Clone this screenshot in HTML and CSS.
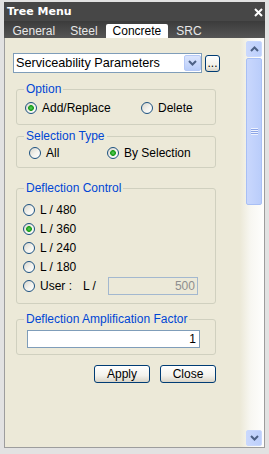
FILE: index.html
```html
<!DOCTYPE html>
<html lang="en">
<head>
<meta charset="UTF-8" />
<meta name="viewport" content="width=device-width, initial-scale=1" />
<title>Tree Menu</title>
<link rel="stylesheet" href="styles.css">
</head>
<body>
<div class="window">
  <div class="titlebar">
    <span class="title">Tree Menu</span>
    <svg class="close" width="9" height="9" viewBox="0 0 9 9"><path d="M1 1L8 8M8 1L1 8" stroke="#fff" stroke-width="2"/></svg>
  </div>
  <div class="tabs">
    <span class="tab">General</span>
    <span class="tab">Steel</span>
    <span class="tab active">Concrete</span>
    <span class="tab">SRC</span>
  </div>
  <div class="panel">
    <div class="content">
      <div class="combo-row">
        <div class="combo">
          <span class="combo-text">Serviceability Parameters</span>
          <span class="combo-btn"><svg width="9" height="6" viewBox="0 0 9 6"><path d="M1 1L4.5 4.5L8 1" fill="none" stroke="#4d6185" stroke-width="2"/></svg></span>
        </div>
        <button class="dots">...</button>
      </div>

      <fieldset class="group g-option">
        <legend>Option</legend>
        <div class="radio-row">
          <label class="radio w-option"><span class="dot on"></span>Add/Replace</label>
          <label class="radio"><span class="dot"></span>Delete</label>
        </div>
      </fieldset>

      <fieldset class="group g-select">
        <legend>Selection Type</legend>
        <div class="radio-row">
          <label class="radio w-select"><span class="dot"></span>All</label>
          <label class="radio"><span class="dot on"></span>By Selection</label>
        </div>
      </fieldset>

      <fieldset class="group g-defl">
        <legend>Deflection Control</legend>
        <div class="defl-list">
          <label class="radio"><span class="dot"></span>L / 480</label>
          <label class="radio"><span class="dot on"></span>L / 360</label>
          <label class="radio"><span class="dot"></span>L / 240</label>
          <label class="radio"><span class="dot"></span>L / 180</label>
          <label class="radio"><span class="dot"></span>User :<span class="l-div">L /</span><input class="user-val" value="500" disabled></label>
        </div>
      </fieldset>

      <fieldset class="group g-amp">
        <legend>Deflection Amplification Factor</legend>
        <input class="amp-val" value="1">
      </fieldset>

      <div class="actions">
        <button class="btn">Apply</button>
        <button class="btn">Close</button>
      </div>
    </div>

    <div class="scroll">
      <div class="sb-btn"><svg width="9" height="6" viewBox="0 0 9 6"><path d="M1 5L4.5 1.5L8 5" fill="none" stroke="#4d6185" stroke-width="2"/></svg></div>
      <div class="thumb"><span class="grip"></span></div>
      <div class="sb-btn down"><svg width="9" height="6" viewBox="0 0 9 6"><path d="M1 1L4.5 4.5L8 1" fill="none" stroke="#4d6185" stroke-width="2"/></svg></div>
    </div>
  </div>
</div>
</body>
</html>
```

FILE: styles.css
```css
body {
  margin: 0;
  background: #e2e2e2;
  font-family: "Liberation Sans", Arial, sans-serif;
  font-size: 12px;
  color: #000;
}
.window {
  width: 269px;
  height: 454px;
  box-sizing: border-box;
  padding: 2px 4px 6px 4px;
  display: flex;
  flex-direction: column;
}
.titlebar {
  height: 19px;
  flex: none;
  background: #474747;
  display: flex;
  align-items: flex-start;
  justify-content: space-between;
  padding: 0 2px 0 3px;
  overflow: hidden;
}
.title {
  font-family: "DejaVu Sans", sans-serif;
  font-weight: bold;
  font-size: 11px;
  line-height: 20px;
  color: #fff;
}
.close {
  margin-top: 6px;
}
.tabs {
  height: 17px;
  flex: none;
  background: linear-gradient(#3b3b3b, #555);
  display: flex;
  align-items: flex-end;
  gap: 2px;
  padding-left: 2px;
}
.tab {
  height: 14px;
  line-height: 14px;
  padding: 0 6.5px;
  color: #e8e8e8;
}
.tab.active {
  background: #fff;
  color: #000;
  border-radius: 2px 2px 0 0;
}
.panel {
  flex: 1;
  min-height: 0;
  display: flex;
  border: 1px solid #9d9d9d;
  border-top: 0;
  background: #ece9d8;
}
.content {
  flex: 1;
  padding: 15px 0 0 8px;
}
.combo-row {
  display: flex;
  align-items: center;
}
.combo {
  width: 189px;
  height: 20px;
  box-sizing: border-box;
  border: 1px solid #7f9db9;
  background: #fff;
  display: flex;
  align-items: center;
}
.combo-text {
  padding-left: 2px;
  font-size: 12.7px;
}
.combo-btn {
  margin-left: auto;
  width: 17px;
  height: 16px;
  box-sizing: border-box;
  border: 1px solid #b5c8f6;
  border-radius: 2px;
  background: linear-gradient(#dbe5fd, #b9cdf9);
  display: flex;
  align-items: center;
  justify-content: center;
}
.dots {
  margin-left: 3px;
  width: 15px;
  height: 17px;
  padding: 0 0 2px;
  box-sizing: border-box;
  border: 1px solid #003c74;
  border-radius: 3px;
  background: linear-gradient(#fff, #f1efe6 70%, #d8d3c6);
  font: inherit;
  line-height: 12px;
  display: flex;
  align-items: flex-end;
  justify-content: center;
}
.group {
  margin: 0 0 0 3px;
  width: 200px;
  min-width: 0;
  box-sizing: border-box;
  border: 1px solid #d0d0bf;
  border-radius: 3px;
  padding: 0;
}
.group legend {
  margin-left: 7px;
  padding: 0 2px;
  line-height: 14px;
  color: #0046d5;
}
.g-option {
  margin-top: 9px;
  padding: 5px 0 9px;
}
.g-option .radio-row {
  padding-left: 8px;
}
.g-select {
  margin-top: 4px;
  padding: 3px 0 7px;
}
.g-select .radio-row {
  padding-left: 12px;
}
.g-defl {
  margin-top: 13px;
  padding: 5px 0 8px;
}
.defl-list {
  padding-left: 6px;
}
.g-amp {
  margin-top: 8px;
  padding: 4px 0 6px;
}
.radio-row {
  display: flex;
  height: 14px;
}
.radio {
  display: flex;
  align-items: center;
}
.w-option {
  width: 116px;
}
.w-select {
  width: 78px;
}
.dot {
  width: 12px;
  height: 12px;
  box-sizing: border-box;
  border: 1px solid #1c5180;
  border-radius: 50%;
  margin-right: 5px;
  background: linear-gradient(135deg, #d8d6cc, #f4f3ee 55%, #fff);
}
.dot.on {
  background: radial-gradient(circle, #5fd35f 0, #21a121 2px, #21a121 2.6px, transparent 3.2px), linear-gradient(135deg, #d8d6cc, #f4f3ee 55%, #fff);
}
.defl-list .radio {
  height: 19px;
}
.l-div {
  margin-left: 11px;
}
.user-val {
  margin-left: 12px;
  width: 90px;
  height: 18px;
  box-sizing: border-box;
  border: 1px solid #a3b8cf;
  background: #ece9d8;
  color: #8e8e8e;
  font: inherit;
  text-align: right;
  padding: 0 2px 0 0;
}
.amp-val {
  display: block;
  margin-left: 10px;
  width: 173px;
  height: 18px;
  box-sizing: border-box;
  border: 1px solid #7f9db9;
  background: #fff;
  font: inherit;
  text-align: right;
  padding: 0 3px 0 0;
}
.actions {
  display: flex;
  justify-content: flex-end;
  gap: 10px;
  width: 200px;
  margin: 10px 0 0 3px;
}
.btn {
  width: 56px;
  height: 18px;
  box-sizing: border-box;
  border: 1px solid #003c74;
  border-radius: 3px;
  background: linear-gradient(#fff, #f3f2ec 60%, #d9d4c7);
  font: inherit;
  padding: 0;
  line-height: 14px;
}
.scroll {
  width: 24px;
  box-sizing: border-box;
  padding: 3px 2px 1px 0;
  display: flex;
  flex-direction: column;
  align-items: flex-end;
  background: linear-gradient(to right, #ece9d8, #f8f7f2 45%, #fefefd);
}
.sb-btn {
  width: 16px;
  height: 16px;
  box-sizing: border-box;
  border: 1px solid #c9d8fd;
  border-radius: 2px;
  background: linear-gradient(to right, #cad8fd, #bccffb);
  display: flex;
  align-items: center;
  justify-content: center;
}
.sb-btn.down {
  margin-top: auto;
}
.thumb {
  margin-top: 1px;
  width: 16px;
  height: 147px;
  box-sizing: border-box;
  border: 1px solid #a8bff5;
  border-radius: 2px;
  background: linear-gradient(to right, #c9d7fd, #bacdfa);
  display: flex;
  align-items: center;
  justify-content: center;
}
.grip {
  width: 7px;
  height: 7px;
  background: repeating-linear-gradient(#eef2fe 0 1px, #8ca5e6 1px 2px);
}
```
